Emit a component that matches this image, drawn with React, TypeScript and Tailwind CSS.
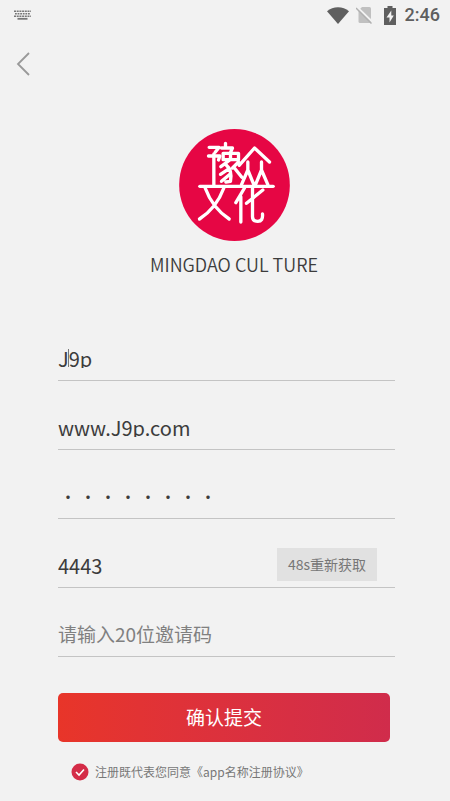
import React, { useState } from 'react';

const inputBase =
    'min-w-0 flex-1 bg-transparent p-0 text-[20px] leading-[20px] h-[20px] text-[#3c3c3c] outline-none placeholder:text-[#808080]';

interface FieldProps {
    children: React.ReactNode;
}

const Field = ({ children }: FieldProps) => (
    <div className="flex h-[69px] items-end border-b border-[#c4c4c4] pb-3">{children}</div>
);

const StatusBar = () => (
    <header className="flex h-[30px] items-center justify-between pl-[14px] pr-[10px]">
        <svg className="h-[10px] w-[17px]" viewBox="0 0 17 10" fill="none" stroke="#777777">
            <path d="M0 1.2H17" strokeWidth="1.6" strokeDasharray="2 .7" />
            <path d="M1 3.8H16" strokeWidth="1.6" strokeDasharray="1.8 .8" />
            <path d="M0 6.2H17" strokeWidth="1.4" strokeDasharray="2 .7" />
            <path d="M3.5 8.8H13.5" strokeWidth="1.8" />
        </svg>
        <div className="flex items-center text-[#5f5f5f]">
            <svg className="h-[17px] w-[22px]" viewBox="0 0 22 17" fill="currentColor">
                <path d="M0 4.3C6-1.2 16-1.2 22 4.3L11 17Z" />
            </svg>
            <svg className="ml-[7px] h-[18px] w-[17px]" viewBox="0 0 17 18">
                <path d="M6 1H13.5Q15 1 15 2.5V15.5Q15 17 13.5 17H4Q2.5 17 2.5 15.5V4.5Z" fill="#c0c0c0" />
                <path d="M1 1L17 16.5" stroke="#f2f2f2" strokeWidth="2" />
                <path d="M0 2L15.5 17.5" stroke="#b0b0b0" strokeWidth="1.5" />
            </svg>
            <svg className="ml-[11px] h-[19px] w-[12px]" viewBox="0 0 12 19">
                <path d="M3.5 0H8.5V2H12V19H0V2H3.5Z" fill="currentColor" />
                <path d="M7.3 4.5L2.5 11.5H5.5V16.5L9.8 9.5H7.3Z" fill="#f2f2f2" />
            </svg>
            <span className="ml-[9px] font-[Roboto] text-[18px] font-medium leading-[20px]">2:46</span>
        </div>
    </header>
);

const Logo = () => (
    <svg className="h-[112px] w-[111px]" viewBox="26 27 332 336" role="img" aria-label="豫众文化">
        <ellipse cx="192" cy="195" rx="166" ry="168" fill="#e60644" />
        <g fill="none" stroke="#ffffff" strokeWidth="10" strokeLinecap="round" strokeLinejoin="round">
            <path d="M116 82H146L134 97M114 108H148L144 120M130 102V196" />
            <path d="M165 70V82M153 84H186L180 97M158 100H204V119H158ZM180 100V118M178 120L151 140M166 134Q186 150 180 184L166 186M176 146L150 163M179 162L153 184M204 126L186 144M190 142L214 172" />
            <path d="M206 136L252 84L297 126M232 126V150L213 194M232 150L250 194M273 126V150L255 194M273 150L292 194" />
            <path d="M88 199H308" />
            <path d="M104 204Q126 264 176 297M160 204Q138 264 87 297" />
            <path d="M222 204L196 248M211 230V306M246 204V290Q246 304 262 304Q278 304 276 282M277 210L228 250" />
        </g>
    </svg>
);

const App = () => {
    const [account, setAccount] = useState('J9p');
    const [site, setSite] = useState('www.J9p.com');
    const [password, setPassword] = useState('12345678');
    const [code, setCode] = useState('4443');
    const [invite, setInvite] = useState('');
    const [agreed, setAgreed] = useState(true);

    return (
        <div className="min-h-screen bg-[#f2f2f2] font-['Noto_Sans_CJK_SC',sans-serif] text-[#3c3c3c]">
            <StatusBar />
            <nav className="flex h-[68px] items-center pl-4">
                <button type="button" aria-label="返回">
                    <svg className="h-6 w-[14px]" viewBox="0 0 14 24" fill="none" stroke="#999999" strokeWidth="1.8">
                        <path d="M13 1L2 12L13 23" />
                    </svg>
                </button>
            </nav>

            <div className="flex flex-col items-center pt-[31px] pl-[18px]">
                <Logo />
                <h1 className="mt-[11px] text-[18px] font-[350] leading-[24px]">MINGDAO CUL TURE</h1>
            </div>

            <form className="mt-9 pl-[58px] pr-[55px]" onSubmit={e => e.preventDefault()}>
                <Field>
                    <div className="relative flex flex-1">
                        <input className={inputBase} aria-label="用户名" value={account} onChange={e => setAccount(e.target.value)} />
                        {/* text cursor */}
                        <span className="absolute top-px left-[10px] h-[18px] w-px bg-[#777777]" />
                    </div>
                </Field>
                <Field>
                    <input className={inputBase} aria-label="账号" value={site} onChange={e => setSite(e.target.value)} />
                </Field>
                <Field>
                    <input
                        className={`${inputBase} font-thin`}
                        type="password"
                        aria-label="密码"
                        value={password}
                        onChange={e => setPassword(e.target.value)}
                    />
                </Field>
                <Field>
                    <input className={inputBase} aria-label="验证码" value={code} onChange={e => setCode(e.target.value)} />
                    <button type="button" className="-mb-[6px] mr-[18px] h-[33px] w-[100px] bg-[#e1e1e1] text-[14px] text-[#777777]">
                        48s重新获取
                    </button>
                </Field>
                <Field>
                    <input
                        className="h-[20px] min-w-0 flex-1 bg-transparent p-0 text-[19px] leading-[20px] outline-none placeholder:text-[#808080]"
                        aria-label="邀请码"
                        placeholder="请输入20位邀请码"
                        value={invite}
                        onChange={e => setInvite(e.target.value)}
                    />
                </Field>

                <button
                    type="submit"
                    className="mt-9 block h-[49px] w-[calc(100%-5px)] rounded-[5px] bg-linear-to-r from-[#e83529] to-[#d02c4b] text-[19px] text-white"
                >
                    确认提交
                </button>

                <label className="mt-5 ml-[13px] flex items-center text-[12px] leading-[20px] text-[#777777]">
                    <input type="checkbox" className="peer sr-only" checked={agreed} onChange={e => setAgreed(e.target.checked)} />
                    <svg className="mr-[6px] h-[18px] w-[18px]" viewBox="0 0 18 18" fill="none">
                        <circle cx="9" cy="9" r="8.5" fill={agreed ? '#d42c47' : '#c4c4c4'} />
                        <path d="M5 9L8 12L13 6.5" stroke="#ffffff" strokeWidth="1.6" />
                    </svg>
                    <span className="whitespace-nowrap">注册既代表您同意《app名称注册协议》</span>
                </label>
            </form>
        </div>
    );
};

export default App;
